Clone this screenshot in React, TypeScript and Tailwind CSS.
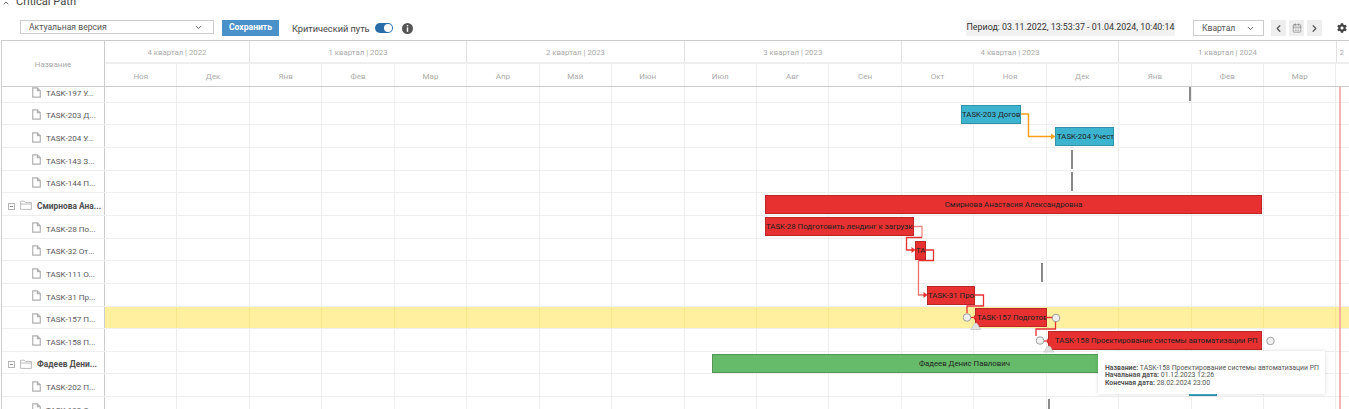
import { ChevronDown, ChevronLeft, ChevronRight, ChevronUp, CalendarDays } from "lucide-react";
import { FaCog } from "react-icons/fa";

const quarters = [
  { title: "4 квартал | 2022", months: 2 },
  { title: "1 квартал | 2023", months: 3 },
  { title: "2 квартал | 2023", months: 3 },
  { title: "3 квартал | 2023", months: 3 },
  { title: "4 квартал | 2023", months: 3 },
  { title: "1 квартал | 2024", months: 3 },
];

const months = ["Ноя", "Дек", "Янв", "Фев", "Мар", "Апр", "Май", "Июн", "Июл", "Авг", "Сен", "Окт", "Ноя", "Дек", "Янв", "Фев", "Мар"];

const rows = [
  { name: "TASK-197 У..." },
  { name: "TASK-203 Д..." },
  { name: "TASK-204 У..." },
  { name: "TASK-143 З..." },
  { name: "TASK-144 П..." },
  { name: "Смирнова Ана...", group: true },
  { name: "TASK-28 По..." },
  { name: "TASK-32 От..." },
  { name: "TASK-111 О..." },
  { name: "TASK-31 Пр..." },
  { name: "TASK-157 П...", active: true },
  { name: "TASK-158 П..." },
  { name: "Фадеев Дени...", group: true },
  { name: "TASK-202 П..." },
  { name: "TASK-192 С..." },
];

const RED = "#e73030";
const BLUE = "#3db4cf";
const GREEN = "#66bb6a";

const bars = [
  { x: 961, y: 105, w: 60, text: "TASK-203 Договор на обучение", color: BLUE },
  { x: 1055, y: 127, w: 59, text: "TASK-204 Учесть обучение", color: BLUE, pad: 1 },
  { x: 765, y: 195, w: 497, text: "Смирнова Анастасия Александровна", color: RED, center: true },
  { x: 765, y: 217, w: 149, text: "TASK-28 Подготовить лендинг к загрузке", color: RED },
  { x: 915, y: 241, w: 11, text: "TASK-32", color: RED },
  { x: 927, y: 286, w: 48, text: "TASK-31 Проверить", color: RED },
  { x: 975, y: 308, w: 72, text: "TASK-157 Подготовка", color: RED, pad: 1 },
  { x: 1048, y: 331, w: 214, text: "TASK-158 Проектирование системы автоматизации РП", color: RED, pad: 6 },
  { x: 712, y: 354, w: 505, text: "Фадеев Денис Павлович", color: GREEN, center: true },
  { x: 1189, y: 377, w: 28, text: "", color: BLUE },
];

const milestones = [
  { x: 1189, y: 87, h: 14 },
  { x: 1071, y: 150, h: 19 },
  { x: 1071, y: 172, h: 19 },
  { x: 1041, y: 263, h: 19 },
  { x: 1048, y: 399, h: 10 },
];

const circles = [
  [967, 317.5],
  [1056, 318],
  [1040, 340.5],
  [1270.5, 341],
];

const FileIcon = () => (
  <svg width="9" height="11" viewBox="0 0 10 12" className="shrink-0" fill="none" stroke="#b0b0b0" strokeWidth="1.3">
    <path d="M0.8 0.8H6L9.2 4V11.2H0.8Z" />
    <path d="M6 0.8V4H9.2" />
  </svg>
);

const FolderIcon = () => (
  <svg width="12" height="10" viewBox="0 0 12 10" className="shrink-0" fill="none" stroke="#b4b4b4" strokeWidth="0.9">
    <path d="M0.6 9.4V1.2H4.2L5.2 2.4H11.4V9.4Z" />
    <path d="M0.6 4H11.4" />
  </svg>
);

const InfoDot = () => (
  <svg width="11" height="11" viewBox="0 0 11 11" className="ml-[9px] mt-[3px] shrink-0">
    <circle cx="5.5" cy="5.5" r="5.5" fill="#555555" />
    <rect x="4.8" y="2" width="1.4" height="1.4" fill="#ffffff" />
    <rect x="4.8" y="4.4" width="1.4" height="4.4" fill="#ffffff" />
  </svg>
);

const Links = () => (
  <svg className="absolute left-0 top-0" width="1349" height="322" viewBox="0 87 1349 322" fill="none">
    {/* today line */}
    <path d="M1340 87V409" stroke="#f59a9a" strokeWidth="1.5" />
    {/* orange link */}
    <path d="M1021 114H1028.5V136.5H1052" stroke="#f8a01c" strokeWidth="1.5" />
    <path d="M1055.5 136.5L1051 133.5V139.5Z" fill="#f8a01c" />
    {/* critical links */}
    <path d="M914 226.5H922V237.5" stroke="#f48a8a" strokeWidth="1.3" />
    <path d="M922 237.5H906.5V250H912" stroke="#e73030" strokeWidth="1.3" />
    <path d="M915.5 250L911.5 247V253Z" fill="#e73030" />
    <path d="M926 250H933.5V260.5H918.5" stroke="#e73030" strokeWidth="1.3" />
    <path d="M918.5 260.5V295H924" stroke="#f07070" strokeWidth="1.3" />
    <path d="M927.5 295L923.5 292V298Z" fill="#e73030" />
    <path d="M975 295H983.5V306H967V313" stroke="#e73030" strokeWidth="1.3" />
    <path d="M971 317.5H975" stroke="#e73030" strokeWidth="1.3" />
    <path d="M977 317.5L974 315V320Z" fill="#e73030" />
    <path d="M1047 317.5H1055.5V329H1036V336" stroke="#e73030" strokeWidth="1.3" />
    <path d="M1044 341H1048" stroke="#e73030" strokeWidth="1.3" />
    <path d="M1050 341L1047 338.5V343.5Z" fill="#e73030" />
    {/* handles */}
    <path d="M970.5 329.5C972.5 329 973 323 975.8 323C978.6 323 979 329 981 329.5Z" fill="#e2e2e2" stroke="#b0b0b0" strokeWidth="0.5" />
    <path d="M1043.5 352C1045.5 351.5 1046 346 1048.8 346C1051.6 346 1052 351.5 1054 352Z" fill="#e2e2e2" stroke="#b0b0b0" strokeWidth="0.5" />
    {circles.map(([cx, cy]) => (
      <circle key={cx} cx={cx} cy={cy} r="3.8" fill="#f0f0f0" stroke="#8c8c8c" strokeWidth="0.8" />
    ))}
  </svg>
);

const App = () => {
  const renderRows = rows.map((row, i) => (
    <div key={i} className={`flex border-b border-[#eeeeee] ${i === 0 ? "h-[15.6px]" : "h-[22.67px]"}`}>
      <div className={`flex w-[103px] shrink-0 items-center overflow-hidden border-r border-[#cccccc] bg-white ${i === 0 ? "" : "pt-[4px]"}`}>
        {row.group ? (
          <>
            <span className="ml-[6px] flex h-[7px] w-[7px] shrink-0 items-center justify-center border border-[#b4b4b4]">
              <span className="h-px w-[3px] bg-[#888888]" />
            </span>
            <span className="ml-[5px] -mt-[2px]">
              <FolderIcon />
            </span>
            <span className="ml-[5px] whitespace-nowrap text-[8.4px] font-bold text-[#505050]">{row.name}</span>
          </>
        ) : (
          <>
            <span className={`ml-[30px] ${i === 0 ? "-mt-[3px]" : "-mt-[2px]"}`}>
              <FileIcon />
            </span>
            <span className={`ml-[5px] whitespace-nowrap text-[8.1px] text-[#5a5a5a] ${i === 0 ? "-mt-[2px]" : ""}`}>{row.name}</span>
          </>
        )}
      </div>
      <div className={`flex flex-1 overflow-hidden ${row.active ? "bg-[#fff09f]" : "bg-white"}`}>
        {months.map((m, j) => (
          <div key={j} className={`h-full w-[72.45px] shrink-0 border-r ${row.active ? "border-[#f7e68c]" : "border-[#eeeeee]"}`} />
        ))}
      </div>
    </div>
  ));

  return (
    <div className="h-[409px] w-[1349px] overflow-hidden bg-white font-['Roboto',sans-serif]">
      <div className="-mt-[3px] flex h-[11px] items-center pl-[2px]">
        <ChevronUp size={8} strokeWidth={2.4} className="text-[#444444]" />
        <span className="ml-[6px] text-[11.1px] text-[#444444]">Critical Path</span>
      </div>

      <div className="flex h-[32px] items-start pt-[12px]">
        <div className="ml-5 flex h-[14px] w-[194px] items-center justify-between border border-[#cccccc] pl-2 pr-[10px] text-[8.6px] text-[#555555]">
          <span>Актуальная версия</span>
          <ChevronDown size={9} strokeWidth={2.6} className="text-[#555555]" />
        </div>
        <button className="ml-[8px] flex h-[16px] w-[57px] items-center justify-center bg-[#4a90c9] pb-[2px] text-[8.6px] font-bold text-white">Сохранить</button>
        <span className="ml-[13px] mt-[1px] text-[9.2px] leading-[16px] text-[#444444]">Критический путь</span>
        <span className="relative ml-[5px] mt-[3px] h-[10px] w-[18px] rounded-full bg-[#2a6ca8]">
          <span className="absolute right-[1px] top-[1px] h-[8px] w-[8px] rounded-full bg-white" />
        </span>
        <InfoDot />
        <div className="ml-auto flex h-[16px] w-[209px] items-center justify-center bg-[#f2f2f2] text-[8.9px] text-[#333333]">
          Период: 03.11.2022, 13:53:37 - 01.04.2024, 10:40:14
        </div>
        <div className="ml-[18px] flex h-[16px] w-[71px] items-center justify-between border border-[#cccccc] pl-2 pr-[8px] text-[8.6px] text-[#555555]">
          <span>Квартал</span>
          <ChevronDown size={9} strokeWidth={2.6} />
        </div>
        <div className="ml-[7px] flex gap-[3px]">
          <span className="flex h-[16px] w-[15px] items-center justify-center bg-[#eeeeee] text-[#555555]">
            <ChevronLeft size={11} strokeWidth={2.6} />
          </span>
          <span className="flex h-[16px] w-[15px] items-center justify-center bg-[#eeeeee] text-[#777777]">
            <CalendarDays size={10} strokeWidth={1.5} />
          </span>
          <span className="flex h-[16px] w-[15px] items-center justify-center bg-[#eeeeee] text-[#555555]">
            <ChevronRight size={11} strokeWidth={2.6} />
          </span>
        </div>
        <FaCog size={10} className="ml-[15px] mr-[2px] mt-[3px] text-[#444444]" />
      </div>

      <div className="relative ml-[1px] border-l border-t border-[#cccccc]">
        <div className="flex h-[46px] border-b border-[#cccccc]">
          <div className="flex w-[103px] shrink-0 items-center justify-center border-r border-[#cccccc] pt-[3px] text-[8px] text-[#aaaaaa]">Название</div>
          <div className="flex flex-1 flex-col overflow-hidden">
            <div className="flex h-[23px] border-b-2 border-[#eeeeee]">
              {quarters.map((q) => (
                <div
                  key={q.title}
                  className="flex h-full shrink-0 items-center justify-center border-r border-[#e2e2e2] pt-[3px] text-[7.8px] text-[#aaaaaa]"
                  style={{ width: q.months * 72.45 }}
                >
                  {q.title}
                </div>
              ))}
              <div className="ml-[3px] flex items-center pt-[3px] text-[7.8px] text-[#aaaaaa]">2</div>
            </div>
            <div className="flex flex-1">
              {months.map((m, i) => (
                <div key={i} className="flex h-full w-[72.45px] shrink-0 items-center justify-center border-r border-[#eeeeee] pt-[3px] text-[8px] text-[#aaaaaa]">
                  {m}
                </div>
              ))}
            </div>
          </div>
        </div>
        {renderRows}
      </div>

      {/* chart canvas over the rows */}
      <div className="pointer-events-none absolute left-0 top-[87px] h-[322px] w-[1349px] overflow-hidden">
        {milestones.map((m) => (
          <div key={`${m.x}-${m.y}`} className="absolute w-[1.5px] bg-[#8a8a8a]" style={{ left: m.x, top: m.y - 87, height: m.h }} />
        ))}
        {bars.map((b) => (
          <div
            key={b.x}
            className={`absolute flex h-[19px] items-center overflow-hidden whitespace-nowrap border border-[#00000030] text-[7.8px] text-[#222222] ${b.center ? "justify-center" : ""}`}
            style={{ left: b.x, top: b.y - 87, width: b.w, backgroundColor: b.color, paddingLeft: b.pad ?? 0 }}
          >
            <span>{b.text}</span>
          </div>
        ))}
        <Links />
        <div className="absolute left-[1098px] top-[264px] flex h-[43px] w-[227px] flex-col justify-end bg-white pb-[6px] pl-[7px] text-[6.9px] leading-[7.8px] text-[#555555] shadow-[0_0_4px_rgba(0,0,0,0.15)]">
          <div className="whitespace-nowrap"><b>Название:</b> TASK-158 Проектирование системы автоматизации РП</div>
          <div className="whitespace-nowrap"><b>Начальная дата:</b> 01.12.2023 12:26</div>
          <div className="whitespace-nowrap"><b>Конечная дата:</b> 28.02.2024 23:00</div>
        </div>
      </div>
    </div>
  );
};

export default App;
